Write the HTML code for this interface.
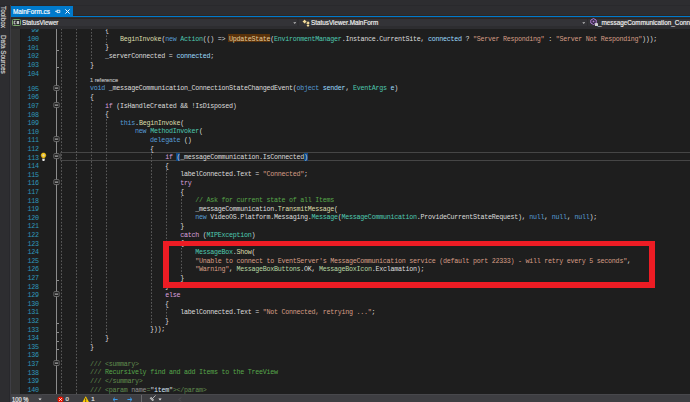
<!DOCTYPE html>
<html><head><meta charset="utf-8"><style>
html,body{margin:0;padding:0}
body{width:690px;height:402px;overflow:hidden;background:#2d2d30;position:relative;font-family:"Liberation Sans",sans-serif}
.abs{position:absolute}
#editor{position:absolute;left:11.2px;top:28.8px;width:678.8px;height:365.2px;overflow:hidden;background:#1e1e1e}
#code{position:absolute;left:-11.2px;top:-28.8px;width:690px;height:402px}
.ln{position:absolute;left:60.00px;height:8.60px;line-height:8.60px;white-space:pre;font-family:"Liberation Mono",monospace;font-size:6.70px;letter-spacing:-0.259px;color:#dcdcdc}
.num{position:absolute;left:0;margin-top:0.3px;width:38.7px;text-align:right;height:8.60px;line-height:8.60px;font-family:"Liberation Mono",monospace;font-size:6.70px;letter-spacing:-0.259px;color:#2f98bc}
.hl{color:#e6cc9e}
.br{background:#0e4583}
.g{position:absolute;width:1px;background-image:linear-gradient(#5a5a5a 0,#5a5a5a 1.6px,transparent 1.6px);background-size:1px 3.22px}
.fb{position:absolute;left:53.5px;width:5.7px;height:5.1px;box-sizing:border-box;border:1px solid #7c7c7c;background:#1e1e1e;border-radius:1px}
.fb i{position:absolute;left:0.3px;top:1.05px;width:3.1px;height:1px;background:#d8d8d8}
.tk{position:absolute;left:56.5px;width:2px;height:1px;background:#8c8c8c}
.ui{position:absolute;white-space:nowrap;font-family:"Liberation Sans",sans-serif;-webkit-text-stroke:0.18px currentColor}
</style></head><body>
<!-- left autohide strip -->
<div class="abs" style="left:0;top:4.6px;width:690px;height:1px;background:#29292c"></div>
<div class="abs" style="left:9.2px;top:5px;width:1px;height:397px;background:#28282c"></div>
<div class="abs" style="left:10.2px;top:5px;width:1px;height:397px;background:#3e3e44"></div>
<div class="ui" style="left:6.6px;top:5.8px;transform-origin:0 0;transform:rotate(90deg) scaleX(0.89);font-size:7.2px;line-height:7.6px;color:#d4d4d4">Toolbox</div>
<div class="ui" style="left:6.6px;top:34.8px;transform-origin:0 0;transform:rotate(90deg) scaleX(0.887);font-size:7.2px;line-height:7.6px;color:#d4d4d4">Data Sources</div>
<!-- tab -->
<div class="abs" style="left:11px;top:6px;width:62px;height:10px;background:#007acc"></div>
<div class="abs" style="left:73px;top:14.9px;width:617px;height:0.9px;background:#2a2624"></div>
<div class="abs" style="left:11px;top:15.8px;width:679px;height:1.7px;background:#007acc"></div>
<div class="abs" style="left:11px;top:17.5px;width:679px;height:1.4px;background:#2a2624"></div>
<div class="ui" style="left:13px;top:7.6px;font-size:7.1px;line-height:8px;color:#ffffff;transform-origin:0 0;transform:scaleX(0.9)">MainForm.cs</div>
<svg class="abs" style="left:54px;top:8px" width="8" height="8" viewBox="0 0 8 8"><path d="M1.1 3.3H3.2M3.2 1.9V4.9" stroke="#fff" stroke-width="0.85" fill="none"/><path d="M3.2 2.3H5.8V4.6H3.2" stroke="#fff" stroke-width="0.8" fill="none"/></svg>
<svg class="abs" style="left:65px;top:9.3px" width="5" height="5" viewBox="0 0 5 5"><path d="M0.4 0.4L4.6 4.6M4.6 0.4L0.4 4.6" stroke="#fff" stroke-width="1"/></svg>
<!-- nav bar -->
<div class="abs" style="left:11.2px;top:18.9px;width:678.8px;height:10px;background:#2d2d30"></div>
<div class="abs" style="left:11.2px;top:18.9px;width:678.8px;height:7.5px;background:#333337"></div>
<div class="abs" style="left:297.4px;top:19px;width:1.2px;height:9.6px;background:#2d2d30"></div>
<div class="abs" style="left:587px;top:19px;width:1.2px;height:9.6px;background:#2d2d30"></div>
<div class="abs" style="left:12.2px;top:19px;width:8.6px;height:7.1px;box-sizing:border-box;border:1px solid #79a86a;background:#26282a;border-radius:1.5px"></div>
<svg class="abs" style="left:13.2px;top:20px" width="6.6" height="5.1" viewBox="0 0 6.6 5.1"><path d="M2.6 1.2H1.2V3.9H2.6" stroke="#e8e8e8" stroke-width="0.9" fill="none"/><path d="M3.6 1.9H6.2M3.6 3.2H6.2M4.4 1V4.1M5.4 1V4.1" stroke="#e8e8e8" stroke-width="0.7"/></svg>
<div class="ui" style="left:21.6px;top:18.6px;font-size:7.2px;line-height:8px;color:#f1f1f1;transform-origin:0 0;transform:scaleX(0.862)">StatusViewer</div>
<svg class="abs" style="left:293px;top:22px" width="3.4" height="2.4" viewBox="0 0 3.4 2.4"><path d="M0.3 0.3H3.1L1.7 2Z" fill="#b8b8b8"/></svg>
<svg class="abs" style="left:301.5px;top:18.5px" width="8.5" height="8.5" viewBox="0 0 8.5 8.5"><path d="M0.4 2.6L2.6 0.4L4.8 2.6L2.6 4.8Z" fill="#f2dc9c" stroke="#202020" stroke-width="0.35"/><path d="M4.2 4L6.1 2.1L8 4L6.1 5.9Z" fill="#f2dc9c" stroke="#202020" stroke-width="0.35"/><path d="M4.4 6.6L6 5L7.6 6.6L6 8.2Z" fill="#f2dc9c" stroke="#202020" stroke-width="0.35"/><path d="M3.4 3.6L4.6 4.6" stroke="#c8b070" stroke-width="0.5"/></svg>
<div class="ui" style="left:311px;top:18.6px;font-size:7.2px;line-height:8px;color:#f1f1f1;transform-origin:0 0;transform:scaleX(0.882)">StatusViewer.MainForm</div>
<svg class="abs" style="left:581.5px;top:22px" width="3.4" height="2.4" viewBox="0 0 3.4 2.4"><path d="M0.3 0.3H3.1L1.7 2Z" fill="#b8b8b8"/></svg>
<svg class="abs" style="left:589.5px;top:18px" width="7" height="7" viewBox="0 0 7 7"><path d="M3.5 0.6L6.2 2.1V5L3.5 6.5L0.8 5V2.1Z" fill="#2a2238" stroke="#b180d7" stroke-width="1"/><rect x="2.6" y="2.6" width="1.8" height="1.8" fill="#b180d7"/></svg>
<div class="abs" style="left:595.3px;top:23.2px;width:2.6px;height:2.6px;background:#d0d0d0;border-radius:1px 1px 0 0"></div>
<div class="ui" style="left:598px;top:18.6px;font-size:7.2px;line-height:8px;color:#f1f1f1;transform-origin:0 0;transform:scaleX(0.882)">_messageCommunication_ConnectionStateChangedEvent(object sender, EventArgs e)</div>
<!-- editor -->
<div id="editor"><div id="code">
<div class="abs" style="left:11.2px;top:0;width:8.8px;height:402px;background:#333333"></div>
<div class="abs" style="left:20px;top:0;width:1px;height:402px;background:#1b1b1b"></div>
<div class="abs" style="left:56px;top:0;width:1px;height:402px;background:#8c8c8c"></div>
<div class="abs" style="left:59.5px;top:152.25px;width:640px;height:8.5px;border:1px solid #464646;border-right:none;box-sizing:border-box;border-radius:1.5px 0 0 1.5px"></div>
<div class="g" style="left:61px;top:28.00px;height:366.16px;background-position:0 0.70px"></div><div class="g" style="left:76px;top:28.00px;height:366.16px;background-position:0 0.70px"></div><div class="g" style="left:91px;top:28.00px;height:32.61px;background-position:0 0.70px"></div><div class="g" style="left:106px;top:34.80px;height:8.60px;background-position:0 0.34px"></div><div class="g" style="left:91px;top:101.63px;height:240.91px;background-position:0 1.13px"></div><div class="g" style="left:106px;top:118.84px;height:215.10px;background-position:0 0.02px"></div><div class="g" style="left:151px;top:153.25px;height:172.08px;background-position:0 1.03px"></div><div class="g" style="left:166px;top:170.46px;height:111.85px;background-position:0 3.14px"></div><div class="g" style="left:181px;top:196.27px;height:25.81px;background-position:0 3.09px"></div><div class="g" style="left:181px;top:247.90px;height:25.81px;background-position:0 2.98px"></div><div class="g" style="left:166px;top:308.12px;height:8.60px;background-position:0 0.72px"></div>
<svg class="abs" style="left:53px;top:84.52px" width="7" height="6.4" viewBox="0 0 7 6.4"><rect x="0.9" y="0.6" width="5.2" height="5" rx="0.8" fill="#1e1e1e" stroke="#7c7c7c" stroke-width="0.8"/><path d="M2 3.1H5" stroke="#e0e0e0" stroke-width="0.9"/></svg><svg class="abs" style="left:53px;top:101.73px" width="7" height="6.4" viewBox="0 0 7 6.4"><rect x="0.9" y="0.6" width="5.2" height="5" rx="0.8" fill="#1e1e1e" stroke="#7c7c7c" stroke-width="0.8"/><path d="M2 3.1H5" stroke="#e0e0e0" stroke-width="0.9"/></svg><svg class="abs" style="left:53px;top:136.14px" width="7" height="6.4" viewBox="0 0 7 6.4"><rect x="0.9" y="0.6" width="5.2" height="5" rx="0.8" fill="#1e1e1e" stroke="#7c7c7c" stroke-width="0.8"/><path d="M2 3.1H5" stroke="#e0e0e0" stroke-width="0.9"/></svg><svg class="abs" style="left:53px;top:153.35px" width="7" height="6.4" viewBox="0 0 7 6.4"><rect x="0.9" y="0.6" width="5.2" height="5" rx="0.8" fill="#1e1e1e" stroke="#7c7c7c" stroke-width="0.8"/><path d="M2 3.1H5" stroke="#e0e0e0" stroke-width="0.9"/></svg><svg class="abs" style="left:53px;top:179.16px" width="7" height="6.4" viewBox="0 0 7 6.4"><rect x="0.9" y="0.6" width="5.2" height="5" rx="0.8" fill="#1e1e1e" stroke="#7c7c7c" stroke-width="0.8"/><path d="M2 3.1H5" stroke="#e0e0e0" stroke-width="0.9"/></svg><svg class="abs" style="left:53px;top:291.02px" width="7" height="6.4" viewBox="0 0 7 6.4"><rect x="0.9" y="0.6" width="5.2" height="5" rx="0.8" fill="#1e1e1e" stroke="#7c7c7c" stroke-width="0.8"/><path d="M2 3.1H5" stroke="#e0e0e0" stroke-width="0.9"/></svg><svg class="abs" style="left:53px;top:359.85px" width="7" height="6.4" viewBox="0 0 7 6.4"><rect x="0.9" y="0.6" width="5.2" height="5" rx="0.8" fill="#1e1e1e" stroke="#7c7c7c" stroke-width="0.8"/><path d="M2 3.1H5" stroke="#e0e0e0" stroke-width="0.9"/></svg>
<div class="tk" style="top:50.00px"></div><div class="tk" style="top:67.21px"></div><div class="tk" style="top:280.31px"></div><div class="tk" style="top:323.33px"></div><div class="tk" style="top:331.93px"></div><div class="tk" style="top:340.54px"></div><div class="tk" style="top:349.14px"></div>
<div class="num" style="top:26.20px">99</div><div class="num" style="top:34.80px">100</div><div class="num" style="top:43.40px">101</div><div class="num" style="top:52.01px">102</div><div class="num" style="top:60.61px">103</div><div class="num" style="top:69.22px">104</div><div class="num" style="top:84.42px">105</div><div class="num" style="top:93.02px">106</div><div class="num" style="top:101.63px">107</div><div class="num" style="top:110.23px">108</div><div class="num" style="top:118.84px">109</div><div class="num" style="top:127.44px">110</div><div class="num" style="top:136.04px">111</div><div class="num" style="top:144.65px">112</div><div class="num" style="top:153.25px">113</div><div class="num" style="top:161.86px">114</div><div class="num" style="top:170.46px">115</div><div class="num" style="top:179.06px">116</div><div class="num" style="top:187.67px">117</div><div class="num" style="top:196.27px">118</div><div class="num" style="top:204.88px">119</div><div class="num" style="top:213.48px">120</div><div class="num" style="top:222.08px">121</div><div class="num" style="top:230.69px">122</div><div class="num" style="top:239.29px">123</div><div class="num" style="top:247.90px">124</div><div class="num" style="top:256.50px">125</div><div class="num" style="top:265.10px">126</div><div class="num" style="top:273.71px">127</div><div class="num" style="top:282.31px">128</div><div class="num" style="top:290.92px">129</div><div class="num" style="top:299.52px">130</div><div class="num" style="top:308.12px">131</div><div class="num" style="top:316.73px">132</div><div class="num" style="top:325.33px">133</div><div class="num" style="top:333.94px">134</div><div class="num" style="top:342.54px">135</div><div class="num" style="top:351.14px">136</div><div class="num" style="top:359.75px">137</div><div class="num" style="top:368.35px">138</div><div class="num" style="top:376.96px">139</div><div class="num" style="top:385.56px">140</div>
<div class="ui" style="left:89.6px;top:77.12px;font-size:6.2px;line-height:6.9px;color:#b4b4b4;transform-origin:0 0;transform:scaleX(0.9)">1 reference</div>
<div class="abs" style="left:228.4px;top:33.6px;width:42px;height:8.6px;background:#5a320a"></div>
<div class="ln" style="top:26.20px">            {</div><div class="ln" style="top:34.80px">                <span style="color:#dcdcaa">BeginInvoke</span>(<span style="color:#569cd6">new</span> <span style="color:#4ec9b0">Action</span>(() =&gt; <span class="hl">UpdateState</span>(<span style="color:#4ec9b0">EnvironmentManager</span>.Instance.CurrentSite, <span style="color:#9cdcfe">connected</span> ? <span style="color:#d69d85">"Server Responding"</span> : <span style="color:#d69d85">"Server Not Responding"</span>)));</div><div class="ln" style="top:43.40px">            }</div><div class="ln" style="top:52.01px">            _serverConnected = <span style="color:#9cdcfe">connected</span>;</div><div class="ln" style="top:60.61px">        }</div><div class="ln" style="top:69.22px"></div><div class="ln" style="top:84.42px">        <span style="color:#569cd6">void</span> _messageCommunication_ConnectionStateChangedEvent(<span style="color:#569cd6">object</span> <span style="color:#9cdcfe">sender</span>, <span style="color:#4ec9b0">EventArgs</span> <span style="color:#9cdcfe">e</span>)</div><div class="ln" style="top:93.02px">        {</div><div class="ln" style="top:101.63px">            <span style="color:#d8a0df">if</span> (IsHandleCreated &amp;&amp; !IsDisposed)</div><div class="ln" style="top:110.23px">            {</div><div class="ln" style="top:118.84px">                <span style="color:#569cd6">this</span>.<span style="color:#dcdcaa">BeginInvoke</span>(</div><div class="ln" style="top:127.44px">                    <span style="color:#569cd6">new</span> <span style="color:#4ec9b0">MethodInvoker</span>(</div><div class="ln" style="top:136.04px">                        <span style="color:#569cd6">delegate</span> ()</div><div class="ln" style="top:144.65px">                        {</div><div class="ln" style="top:153.25px">                            <span style="color:#d8a0df">if</span> <span class="br">(</span>_messageCommunication.IsConnected<span class="br">)</span></div><div class="ln" style="top:161.86px">                            {</div><div class="ln" style="top:170.46px">                                labelConnected.Text = <span style="color:#d69d85">"Connected"</span>;</div><div class="ln" style="top:179.06px">                                <span style="color:#d8a0df">try</span></div><div class="ln" style="top:187.67px">                                {</div><div class="ln" style="top:196.27px">                                    <span style="color:#57a64a">// Ask for current state of all Items</span></div><div class="ln" style="top:204.88px">                                    _messageCommunication.<span style="color:#dcdcaa">TransmitMessage</span>(</div><div class="ln" style="top:213.48px">                                    <span style="color:#569cd6">new</span> VideoOS.Platform.Messaging.<span style="color:#4ec9b0">Message</span>(<span style="color:#4ec9b0">MessageCommunication</span>.ProvideCurrentStateRequest), <span style="color:#569cd6">null</span>, <span style="color:#569cd6">null</span>, <span style="color:#569cd6">null</span>);</div><div class="ln" style="top:222.08px">                                }</div><div class="ln" style="top:230.69px">                                <span style="color:#d8a0df">catch</span> (<span style="color:#4ec9b0">MIPException</span>)</div><div class="ln" style="top:239.29px">                                {</div><div class="ln" style="top:247.90px">                                    <span style="color:#4ec9b0">MessageBox</span>.<span style="color:#dcdcaa">Show</span>(</div><div class="ln" style="top:256.50px">                                    <span style="color:#d69d85">"Unable to connect to EventServer's MessageCommunication service (default port 22333) - will retry every 5 seconds"</span>,</div><div class="ln" style="top:265.10px">                                    <span style="color:#d69d85">"Warning"</span>, <span style="color:#b8d7a3">MessageBoxButtons</span>.OK, <span style="color:#b8d7a3">MessageBoxIcon</span>.Exclamation);</div><div class="ln" style="top:273.71px">                                }</div><div class="ln" style="top:282.31px">                            }</div><div class="ln" style="top:290.92px">                            <span style="color:#d8a0df">else</span></div><div class="ln" style="top:299.52px">                            {</div><div class="ln" style="top:308.12px">                                labelConnected.Text = <span style="color:#d69d85">"Not Connected, retrying ..."</span>;</div><div class="ln" style="top:316.73px">                            }</div><div class="ln" style="top:325.33px">                        }));</div><div class="ln" style="top:333.94px">            }</div><div class="ln" style="top:342.54px">        }</div><div class="ln" style="top:351.14px"></div><div class="ln" style="top:359.75px">        <span style="color:#608b4e">/// </span><span style="color:#608b4e">&lt;summary&gt;</span></div><div class="ln" style="top:368.35px">        <span style="color:#608b4e">/// </span><span style="color:#57a64a">Recursively find and add Items to the TreeView</span></div><div class="ln" style="top:376.96px">        <span style="color:#608b4e">/// </span><span style="color:#608b4e">&lt;/summary&gt;</span></div><div class="ln" style="top:385.56px">        <span style="color:#608b4e">/// </span><span style="color:#608b4e">&lt;param </span><span style="color:#909090">name</span><span style="color:#608b4e">=</span><span style="color:#d8d8d8">"</span><span style="color:#d4e6f6">item</span><span style="color:#d8d8d8">"</span><span style="color:#608b4e">&gt;&lt;/param&gt;</span></div>
<svg class="abs" style="left:39.8px;top:152.2px" width="7" height="9.5" viewBox="0 0 7 9.5"><path d="M3.5 0.5C5.1 0.5 6.3 1.7 6.3 3.2C6.3 4.3 5.6 5 5 5.7V6.4H2V5.7C1.4 5 0.7 4.3 0.7 3.2C0.7 1.7 1.9 0.5 3.5 0.5Z" fill="#f5c518" stroke="#111" stroke-width="0.45"/><circle cx="3.5" cy="3.3" r="1.1" fill="#d8d4c0"/><path d="M2.3 6.8H4.7V8.2C4.7 8.7 4.2 9 3.5 9C2.8 9 2.3 8.7 2.3 8.2Z" fill="#e8e8e8"/></svg>
<div class="abs" style="left:163px;top:240.6px;width:480.3px;height:36.3px;border:6px solid #ed1c24;border-top-width:5.6px;border-bottom-width:6.3px"></div>
</div></div>
<!-- hscroll/status bar -->
<div class="abs" style="left:11.2px;top:394px;width:678.8px;height:8px;background:#3e3e42"></div>
<div class="abs" style="left:42px;top:394px;width:648px;height:1px;background:#48484c"></div>
<div class="abs" style="left:11.2px;top:394.3px;width:30.8px;height:7.7px;background:#424246"></div>
<div class="ui" style="left:12px;top:395.9px;font-size:6.3px;line-height:7px;color:#e8e8e8;transform-origin:0 0;transform:scaleX(0.92)">100 %</div>
<svg class="abs" style="left:38px;top:397.8px" width="4" height="3" viewBox="0 0 4 3"><path d="M0.4 0.4H3.6L2 2.3Z" fill="#e8e8e8"/></svg>
<svg class="abs" style="left:57px;top:395.5px" width="7" height="7" viewBox="0 0 7 7"><circle cx="3.5" cy="3.5" r="3" fill="#e51400"/><path d="M2.2 2.2L4.8 4.8M4.8 2.2L2.2 4.8" stroke="#fff" stroke-width="0.9"/></svg>
<div class="ui" style="left:65.6px;top:395.9px;font-size:6px;line-height:7px;color:#e0e0e0">0</div>
<svg class="abs" style="left:81.5px;top:395.5px" width="7.5" height="7" viewBox="0 0 7.5 7"><path d="M3.75 0.3L7.3 6.6H0.2Z" fill="#ffcc00"/><rect x="3.35" y="2.3" width="0.8" height="2.4" fill="#1e1e1e"/><rect x="3.35" y="5.2" width="0.8" height="0.8" fill="#1e1e1e"/></svg>
<div class="ui" style="left:91.2px;top:395.9px;font-size:6px;line-height:7px;color:#e0e0e0">1</div>
<svg class="abs" style="left:111.5px;top:396.5px" width="6" height="5" viewBox="0 0 6 5"><path d="M5.6 2.5H1.2M3 0.6L1 2.5L3 4.4" stroke="#3e9ae8" stroke-width="1" fill="none"/></svg>
<svg class="abs" style="left:126.5px;top:396.5px" width="6" height="5" viewBox="0 0 6 5"><path d="M0.4 2.5H4.8M3 0.6L5 2.5L3 4.4" stroke="#3e9ae8" stroke-width="1" fill="none"/></svg>
<div class="abs" style="left:140.6px;top:395px;width:1px;height:7px;background:#6a6a6e"></div>
<svg class="abs" style="left:148.5px;top:395px" width="7" height="7" viewBox="0 0 7 7"><path d="M6.6 0.4L3.6 3.4M1 3.2L3.8 6L4.4 4.4L2.6 2.6Z" stroke="#c0c0c0" stroke-width="0.9" fill="#a0a0a0"/></svg>
<svg class="abs" style="left:158px;top:397.5px" width="4" height="3" viewBox="0 0 4 3"><path d="M0.4 0.4H3.6L2 2.4Z" fill="#e8e8e8"/></svg>
<svg class="abs" style="left:177.5px;top:396.5px" width="4" height="5" viewBox="0 0 4 5"><path d="M3 0.5L1 2.5L3 4.5" stroke="#555559" stroke-width="0.9" fill="none"/></svg>
</body></html>
